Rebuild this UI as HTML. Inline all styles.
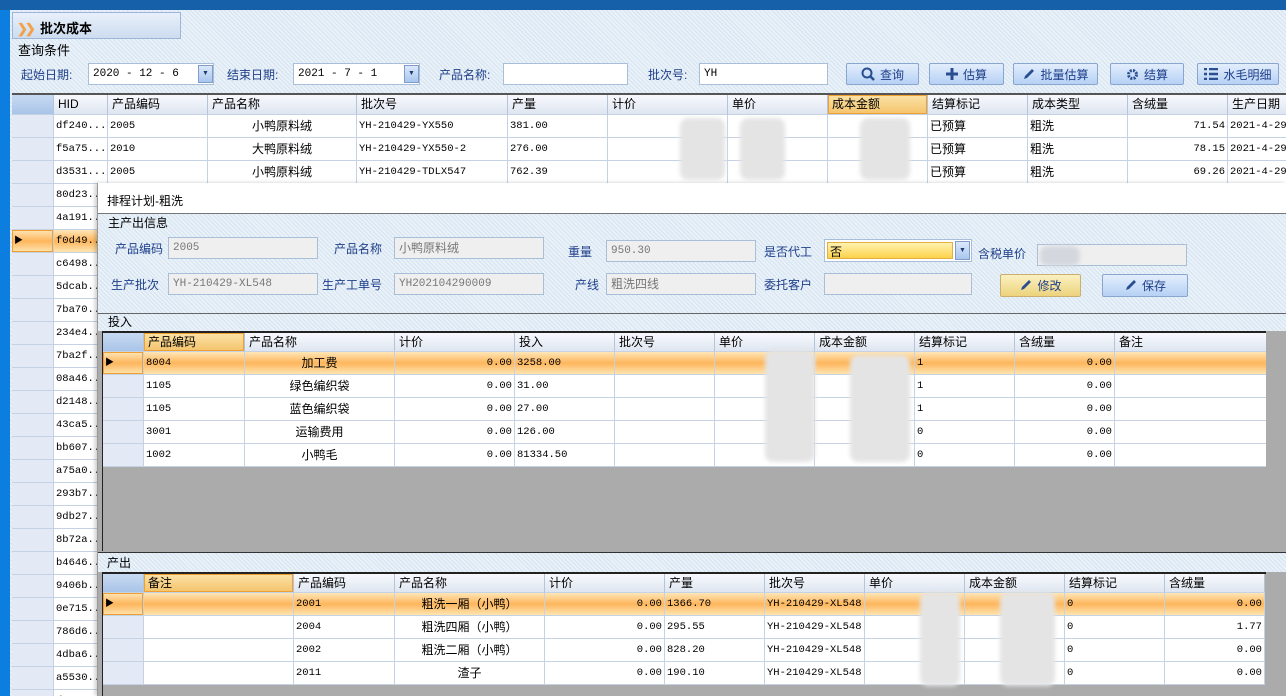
<!DOCTYPE html>
<html><head><meta charset="utf-8">
<style>
*{box-sizing:border-box;margin:0;padding:0}
body{width:1286px;height:696px;overflow:hidden;position:relative;font-family:"Liberation Sans","Noto Sans CJK SC",sans-serif;font-size:12px;color:#000;background:#dfe9f4}
.hatch{background:repeating-linear-gradient(45deg,#d6e3f0 0 1px,#e9f1f9 1px 3px)}
.abs{position:absolute}
.lbl{position:absolute;color:#1e3f8a;font-size:12px}
.inp{position:absolute;background:#fff;border:1px solid #a9bfd8;font-family:"Liberation Mono","Noto Sans CJK SC",monospace;font-size:11px;padding:0 4px;line-height:20px;height:22px}
.dis{background:#efefef;color:#777}
.btn{position:absolute;height:22px;border:1px solid #8aa6cf;border-radius:2px;background:linear-gradient(#e3eefc,#b6d1f5);color:#1e3f8a;font-size:12px;display:flex;align-items:center;justify-content:center;gap:5px}
.grid{position:absolute;background:#ababab;overflow:hidden}
.row{position:absolute;left:0;height:23px;white-space:nowrap}
.c{position:absolute;top:0;height:100%;border-right:1px solid #c5d2e3;border-bottom:1px solid #c5d2e3;padding:0 2px;line-height:22px;overflow:hidden;font-family:"Liberation Mono","Noto Sans CJK SC",monospace;font-size:10.5px;background:#fff}
.c.m{font-family:"Liberation Sans","Noto Sans CJK SC",sans-serif;font-size:12px}
.c.l{text-align:left}
.h .c{background:linear-gradient(#f7f9fd,#dfe6f1);border-right:1px solid #b5c4d9;font-family:"Liberation Sans","Noto Sans CJK SC",sans-serif;font-size:12px;padding:0 4px;line-height:19px}
.h .c.sel{background:linear-gradient(#fbe3a8,#f4c36b);box-shadow:inset 0 0 0 1px #f0a030}
.rh{background:#e3eaf6 !important}
.hrh{background:linear-gradient(#c8daf2,#a9c4e8) !important}
.s .c{background:linear-gradient(#ffe6b8,#fdb65c 50%,#ffe4b0)}
.s .c.rh{background:linear-gradient(#ffe6b8,#fdb65c 50%,#ffe4b0) !important;box-shadow:inset 0 0 0 1px #f0a030}
.r{text-align:right}.m{text-align:center}
.blur{position:absolute;background:#e4e4e4;border-radius:8px;filter:blur(2px)}
</style></head><body>
<div class="abs" style="left:0;top:0;width:1286px;height:10px;background:#1560a8"></div>
<div class="abs" style="left:0;top:10px;width:10px;height:686px;background:#0c7ee0"></div>
<div class="abs hatch" style="left:10px;top:10px;width:1276px;height:686px"></div>
<div class="abs" style="left:12px;top:12px;width:169px;height:27px;border:1px solid #9bb6d8;background:linear-gradient(#e8f0fa,#cddcef);font-weight:bold;font-size:13px;padding:5px 4px"><span style="color:#f4a048;font-weight:bold;letter-spacing:-3px">❯❯</span>&nbsp; 批次成本</div>
<div class="abs" style="left:18px;top:40px;font-size:13px">查询条件</div>
<div class="lbl" style="left:21px;top:66px">起始日期:</div>
<div class="inp" style="left:88px;top:63px;width:126px">2020 - 12 - 6</div>
<div class="abs" style="left:198px;top:65px;width:15px;height:18px;background:linear-gradient(#dbe8fb,#a9c6ee);border:1px solid #7f9ccc;font-size:7px;text-align:center;line-height:16px;color:#203a70">▼</div>
<div class="lbl" style="left:227px;top:66px">结束日期:</div>
<div class="inp" style="left:293px;top:63px;width:127px">2021 - 7 - 1</div>
<div class="abs" style="left:404px;top:65px;width:15px;height:18px;background:linear-gradient(#dbe8fb,#a9c6ee);border:1px solid #7f9ccc;font-size:7px;text-align:center;line-height:16px;color:#203a70">▼</div>
<div class="lbl" style="left:439px;top:66px">产品名称:</div>
<div class="inp" style="left:503px;top:63px;width:125px"></div>
<div class="lbl" style="left:648px;top:66px">批次号:</div>
<div class="inp" style="left:699px;top:63px;width:129px">YH</div>
<div class="btn" style="left:846px;top:63px;width:73px"><svg width="14" height="14"><circle cx="6" cy="6" r="4.5" fill="none" stroke="#2a4f90" stroke-width="2"/><path d="M9 9l4 4" stroke="#2a4f90" stroke-width="2.5"/></svg>查询</div>
<div class="btn" style="left:929px;top:63px;width:75px"><svg width="12" height="12"><path d="M6 0v12M0 6h12" stroke="#2a4f90" stroke-width="3"/></svg>估算</div>
<div class="btn" style="left:1013px;top:63px;width:85px"><svg width="13" height="13"><path d="M2 11l1-3 7-7 2 2-7 7z" fill="#2a4f90"/></svg>批量估算</div>
<div class="btn" style="left:1110px;top:63px;width:74px"><svg width="13" height="13"><circle cx="6.5" cy="6.5" r="4" fill="none" stroke="#2a4f90" stroke-width="3" stroke-dasharray="2 1.2"/></svg>结算</div>
<div class="btn" style="left:1197px;top:63px;width:82px"><svg width="14" height="12"><path d="M0 1h3M5 1h9M0 6h3M5 6h9M0 11h3M5 11h9" stroke="#2a4f90" stroke-width="2.5"/></svg>水毛明细</div>

<div class="grid" id="g1" style="left:12px;top:93px;width:1274px;height:603px;background:#fff;border-top:2px solid #555"></div>

<div class="abs" style="left:97px;top:183px;width:1189px;height:513px;background:#ababab;border-left:1px solid #999;box-shadow:-2px 0 4px rgba(0,0,0,.2)">
 <div class="abs" style="left:0;top:0;width:1189px;height:31px;background:#fff;border-bottom:1px solid #777;padding:9px 9px;font-size:12px">排程计划-粗洗</div>
 <div class="abs hatch" style="left:0;top:31px;width:1189px;height:100px;border-bottom:1px solid #666"></div>
 <div class="abs hatch" style="left:0;top:131px;width:1189px;height:17px"></div>
 <div class="abs hatch" style="left:0;top:369px;width:1189px;height:20px;border-top:1px solid #333"></div>
</div>
<div class="abs" style="left:108px;top:214px;font-size:12px">主产出信息</div>
<div class="lbl" style="left:115px;top:240px">产品编码</div>
<div class="inp dis" style="left:168px;top:237px;width:150px">2005</div>
<div class="lbl" style="left:334px;top:240px">产品名称</div>
<div class="inp dis" style="left:394px;top:237px;width:150px;font-family:'Liberation Sans','Noto Sans CJK SC',sans-serif;font-size:12px">小鸭原料绒</div>
<div class="lbl" style="left:568px;top:243px">重量</div>
<div class="inp dis" style="left:606px;top:240px;width:150px">950.30</div>
<div class="lbl" style="left:764px;top:243px">是否代工</div>
<div class="abs" style="left:824px;top:239px;width:148px;height:23px;border:1px solid #a9bfd8;background:#fff"><div style="position:absolute;left:2px;top:2px;width:126px;height:17px;background:linear-gradient(#fff2b0,#fdd24a);border:1px solid #e0b040;font-size:12px;padding-left:2px">否</div><div style="position:absolute;right:1px;top:1px;width:15px;height:19px;background:linear-gradient(#dbe8fb,#a9c6ee);border:1px solid #7f9ccc;font-size:7px;text-align:center;line-height:17px;color:#203a70">▼</div></div>
<div class="lbl" style="left:978px;top:245px">含税单价</div>
<div class="inp dis" style="left:1037px;top:244px;width:150px"></div>
<div class="blur" style="left:1040px;top:246px;width:40px;height:20px;background:#d4d8de"></div>
<div class="lbl" style="left:111px;top:276px">生产批次</div>
<div class="inp dis" style="left:168px;top:273px;width:150px">YH-210429-XL548</div>
<div class="lbl" style="left:322px;top:276px">生产工单号</div>
<div class="inp dis" style="left:394px;top:273px;width:150px">YH202104290009</div>
<div class="lbl" style="left:575px;top:276px">产线</div>
<div class="inp dis" style="left:606px;top:273px;width:150px;font-family:'Liberation Sans','Noto Sans CJK SC',sans-serif;font-size:12px">粗洗四线</div>
<div class="lbl" style="left:764px;top:276px">委托客户</div>
<div class="inp dis" style="left:824px;top:273px;width:148px"></div>
<div class="btn" style="left:1000px;top:274px;width:81px;height:23px;background:linear-gradient(#fbf0c0,#ecd37c);border-color:#c9b070"><svg width="13" height="13"><path d="M2 11l1-3 7-7 2 2-7 7z" fill="#2a4f90"/></svg>修改</div>
<div class="btn" style="left:1102px;top:274px;width:86px;height:23px"><svg width="13" height="13"><path d="M2 11l1-3 7-7 2 2-7 7z" fill="#2a4f90"/></svg>保存</div>
<div class="abs" style="left:108px;top:313px;font-size:12px">投入</div>
<div class="grid" id="g2" style="left:102px;top:331px;width:1164px;height:220px;border-top:2px solid #222;border-left:1px solid #222"></div>
<div class="abs" style="left:107px;top:554px;font-size:12px">产出</div>
<div class="grid" id="g3" style="left:102px;top:572px;width:1164px;height:124px;border-top:2px solid #222;border-left:1px solid #222"></div>

<script>
function grid(id,cols,heads,rows,selIdx,selHead,hh){
 const g=document.getElementById(id);let html='';
 let x=0;let h='<div class="row h" style="top:0;height:'+hh+'px;width:100%">';
 cols.forEach((w,i)=>{h+='<div class="c '+(i==0?'hrh':'')+(i==selHead?' sel':'')+'" style="left:'+x+'px;width:'+w+'px">'+(heads[i]||'')+'</div>';x+=w;});
 html+=h+'</div>';
 rows.forEach((r,ri)=>{let x=0;let s='<div class="row'+(ri===selIdx?' s':'')+'" style="top:'+(hh+ri*23)+'px;width:100%">';
  cols.forEach((w,i)=>{let v=r[i]||'';let cls='c';if(i==0)cls+=' rh';if(typeof v=='object'){cls+=' '+v[1];v=v[0];}
   if(i==0&&ri===selIdx)v='<span style="font-size:9px">▶</span>';
   s+='<div class="'+cls+'" style="left:'+x+'px;width:'+w+'px">'+v+'</div>';x+=w;});
  html+=s+'</div>';});
 g.innerHTML=html;
}
const ids=['df240...','f5a75...','d3531...','80d23...','4a191...','f0d49...','c6498...','5dcab...','7ba70...','234e4...','7ba2f...','08a46...','d2148...','43ca5...','bb607...','a75a0...','293b7...','9db27...','8b72a...','b4646...','9406b...','0e715...','786d6...','4dba6...','a5530...','d...'];
let r1=ids.map((d,i)=>{if(i<3){return ['',d,['2005','2010','2005'][i],[['小鸭原料绒','大鸭原料绒','小鸭原料绒'][i],'m'],['YH-210429-YX550','YH-210429-YX550-2','YH-210429-TDLX547'][i],['381.00','276.00','762.39'][i],'','','',['已预算','m l'],['粗洗','m l'],[['71.54','78.15','69.26'][i],'r'],'2021-4-29']}return ['',d];});
grid('g1',[42,54,100,149,151,100,120,100,100,100,100,100,100],['','HID','产品编码','产品名称','批次号','产量','计价','单价','成本金额','结算标记','成本类型','含绒量','生产日期'],r1,5,8,20);
grid('g2',[41,101,150,120,100,100,100,100,100,100,152],['','产品编码','产品名称','计价','投入','批次号','单价','成本金额','结算标记','含绒量','备注'],
[['','8004',['加工费','m'],['0.00','r'],'3258.00','','','','1',['0.00','r'],''],
['','1105',['绿色编织袋','m'],['0.00','r'],'31.00','','','','1',['0.00','r'],''],
['','1105',['蓝色编织袋','m'],['0.00','r'],'27.00','','','','1',['0.00','r'],''],
['','3001',['运输费用','m'],['0.00','r'],'126.00','','','','0',['0.00','r'],''],
['','1002',['小鸭毛','m'],['0.00','r'],'81334.50','','','','0',['0.00','r'],'']],0,1,19);
grid('g3',[41,150,101,150,120,100,100,100,100,100,100],['','备注','产品编码','产品名称','计价','产量','批次号','单价','成本金额','结算标记','含绒量'],
[['','','2001',['粗洗一厢（小鸭）','m'],['0.00','r'],'1366.70','YH-210429-XL548','','','0',['0.00','r']],
['','','2004',['粗洗四厢（小鸭）','m'],['0.00','r'],'295.55','YH-210429-XL548','','','0',['1.77','r']],
['','','2002',['粗洗二厢（小鸭）','m'],['0.00','r'],'828.20','YH-210429-XL548','','','0',['0.00','r']],
['','','2011',['渣子','m'],['0.00','r'],'190.10','YH-210429-XL548','','','0',['0.00','r']]],0,1,19);
</script>
<div class="blur" style="left:680px;top:118px;width:45px;height:62px"></div>
<div class="blur" style="left:740px;top:118px;width:45px;height:62px"></div>
<div class="blur" style="left:860px;top:118px;width:50px;height:62px"></div>
<div class="blur" style="left:765px;top:350px;width:50px;height:112px"></div>
<div class="blur" style="left:850px;top:355px;width:60px;height:107px"></div>
<div class="blur" style="left:920px;top:592px;width:40px;height:94px"></div>
<div class="blur" style="left:1000px;top:592px;width:55px;height:94px"></div>
</body></html>
